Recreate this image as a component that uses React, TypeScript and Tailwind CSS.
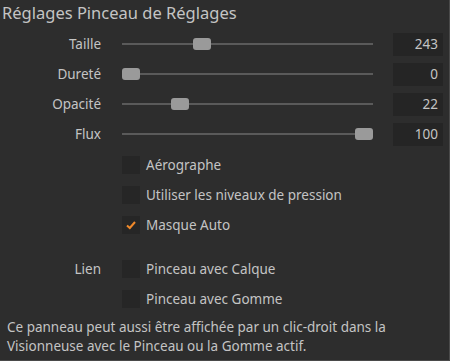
import React from 'react';

const sliders = [
  { label: 'Taille', value: 243, pos: 71 },
  { label: 'Dureté', value: 0, pos: 0 },
  { label: 'Opacité', value: 22, pos: 49 },
  { label: 'Flux', value: 100, pos: 233 },
];

const SliderRow = ({ label, value, pos }: { label: string; value: number; pos: number }) => (
  <div className="flex items-center h-[30px]">
    <div className="w-[101px] text-right">{label}</div>
    <div className="relative ml-[21px] w-[251px] h-[12px] flex items-center">
      <div className="w-full h-[2px] bg-[#5a5a5a]" />
      <div
        className="absolute top-0 w-[18px] h-[12px] rounded-[3px] bg-[#9a9a9a]"
        style={{ left: pos }}
      />
    </div>
    <div className="ml-[20px] w-[50px] h-[23px] bg-[#252525] text-right pr-[5px] leading-[23px]">
      {value}
    </div>
  </div>
);

const Check = ({ label, checked }: { label: string; checked?: boolean }) => (
  <div className="flex items-center h-[30px]">
    <div className="w-[18px] h-[18px] bg-[#262626] flex items-center justify-center">
      {checked && (
        <svg width="12" height="12" viewBox="0 0 12 12">
          <path d="M2 6.5 L4.8 9 L10 3" fill="none" stroke="#f0892a" strokeWidth="2" />
        </svg>
      )}
    </div>
    <div className="ml-[6px]">{label}</div>
  </div>
);

export default function App() {
  return (
    <div
      className="w-[450px] h-[361px] bg-[#2d2d2d] text-[#c4c4c4] text-[13.5px] border-r border-b border-[#4a4a4a] overflow-hidden"
      style={{ fontFamily: '"Noto Sans", sans-serif' }}
    >
      <div className="pl-[2px] pt-[1px] h-[28px] text-[16.5px] leading-[24px]">Réglages Pinceau de Réglages</div>
      <div className="mt-[1px]">
        {sliders.map((s) => (
          <SliderRow key={s.label} {...s} />
        ))}
      </div>
      <div className="pl-[122px] mt-[1px]">
        <Check label="Aérographe" />
        <Check label="Utiliser les niveaux de pression" />
        <Check label="Masque Auto" checked />
      </div>
      <div className="flex mt-[14px]">
        <div className="w-[101px] text-right h-[30px] leading-[30px]">Lien</div>
        <div className="ml-[21px]">
          <Check label="Pinceau avec Calque" />
          <Check label="Pinceau avec Gomme" />
        </div>
      </div>
      <div className="px-[7px] mt-[4px] leading-[19px]">
        Ce panneau peut aussi être affichée par un clic-droit dans la Visionneuse avec le Pinceau ou la Gomme actif.
      </div>
    </div>
  );
}
